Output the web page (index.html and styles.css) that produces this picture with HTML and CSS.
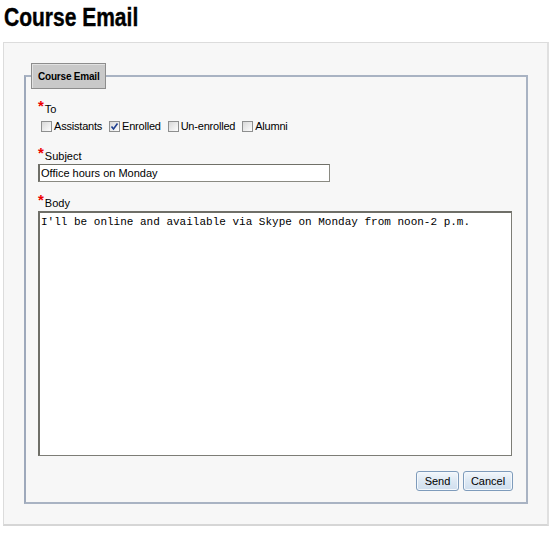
FILE: index.html
```html
<!DOCTYPE html>
<html lang="en">
<head>
  <meta charset="UTF-8">
  <meta name="viewport" content="width=device-width, initial-scale=1.0">
  <title>Course Email</title>
  <link rel="stylesheet" href="styles.css">
</head>
<body>
  <h1 class="page-title"><span>Course Email</span></h1>

  <div class="panel">
    <fieldset class="email-form">
      <legend>Course Email</legend>

      <div class="field-label"><span class="req">*</span>To</div>
      <div class="checks">
        <label class="check"><span class="box"></span>Assistants</label>
        <label class="check"><span class="box checked"><svg width="9" height="9" viewBox="0 0 9 9"><path d="M1.5 4.5 L3.5 7 L7.5 1.5" fill="none" stroke="#1f3f8f" stroke-width="1.6"/></svg></span>Enrolled</label>
        <label class="check"><span class="box"></span>Un-enrolled</label>
        <label class="check"><span class="box"></span>Alumni</label>
      </div>

      <div class="field-label gap"><span class="req">*</span>Subject</div>
      <input class="text-input" type="text" value="Office hours on Monday">

      <div class="field-label gap"><span class="req">*</span>Body</div>
      <textarea class="body-input">I'll be online and available via Skype on Monday from noon-2 p.m.</textarea>

      <div class="actions">
        <button class="btn send">Send</button>
        <button class="btn cancel">Cancel</button>
      </div>
    </fieldset>
  </div>
</body>
</html>
```

FILE: styles.css
```css
body {
  margin: 0;
  padding: 0 3px;
  background: #fff;
  color: #000;
  font-family: "Liberation Sans", Arial, sans-serif;
  font-size: 11px;
}
.page-title {
  margin: 0;
  padding: 3px 0 0 1px;
  height: 42px;
  box-sizing: border-box;
  font-family: "Liberation Sans", Arial, sans-serif;
  font-size: 25px;
  line-height: 28px;
  font-weight: bold;
}
.page-title span {
  display: inline-block;
  transform: scaleX(0.84);
  transform-origin: left center;
  -webkit-text-stroke: 0.4px #000;
}
.panel {
  width: 546px;
  box-sizing: border-box;
  padding: 20px;
  background: #f7f7f7;
  border: 1px solid #dcdcdc;
  border-bottom: 2px solid #d6d6d6;
  border-right: 2px solid #e0e0e0;
}
.email-form {
  margin: 0;
  width: 504px;
  box-sizing: border-box;
  padding: 14px 12px 11px 12px;
  border: 2px solid #a9b3c3;
  border-left-color: #9ea9bb;
}
.email-form legend {
  display: block;
  height: 26px;
  box-sizing: border-box;
  margin-left: -7px;
  padding: 6px 5px 0 6px;
  background: #c9c9c9;
  border: 1px solid #8d8d8d;
  box-shadow: inset 1px 1px 0 #e2e2e2;
  font-size: 10px;
  line-height: 13px;
  font-weight: bold;
  letter-spacing: -0.2px;
}
.field-label {
  line-height: 13px;
  height: 13px;
}
.field-label.gap {
  margin-top: 17px;
}
.req {
  color: #e00;
  font-size: 15px;
  font-weight: bold;
  line-height: 0;
  vertical-align: 2px;
  margin-right: 1px;
}
.checks {
  margin-top: 4px;
  line-height: 13px;
  height: 13px;
  white-space: nowrap;
  letter-spacing: -0.2px;
}
.check {
  margin-right: 1px;
}
.box {
  display: inline-block;
  width: 11px;
  height: 11px;
  box-sizing: border-box;
  margin: 0 2px 0 3px;
  vertical-align: -2px;
  border: 1px solid #8e8f8f;
  background: linear-gradient(135deg, #d8d8d8, #fdfdfd);
  position: relative;
}
.box svg {
  position: absolute;
  left: 0;
  top: 0;
}
.text-input {
  display: block;
  margin: 1px 0 0;
  width: 292px;
  height: 18px;
  box-sizing: border-box;
  padding: 0 1px;
  border: 1px solid #8a8a82;
  border-left: 2px solid #6f6f68;
  border-top-color: #707068;
  background: #fff;
  font-family: "Liberation Sans", Arial, sans-serif;
  font-size: 11px;
  color: #000;
}
.text-input + .field-label {
  margin-top: 15px;
}
.body-input {
  display: block;
  margin: 1px 0 0;
  width: 474px;
  height: 245px;
  box-sizing: border-box;
  padding: 3px 1px;
  border: 1px solid #7d7d76;
  border-left: 2px solid #6f6f68;
  border-top: 2px solid #6f6f68;
  background: #fff;
  resize: none;
  font-family: "Liberation Mono", "Courier New", monospace;
  font-size: 11px;
  line-height: 13px;
  color: #000;
}
.actions {
  display: flex;
  justify-content: flex-end;
  gap: 4px;
  margin-top: 15px;
  padding-right: 1px;
}
.btn {
  height: 20px;
  box-sizing: border-box;
  padding: 0;
  border: 1px solid #7e9bbb;
  border-radius: 3px;
  background: linear-gradient(#f3f7fb, #dde8f3 50%, #cfdeee);
  box-shadow: inset 0 0 0 1px #f4f8fc;
  font-family: "Liberation Sans", Arial, sans-serif;
  font-size: 11px;
  line-height: 18px;
  color: #000;
}
.btn.send {
  width: 43px;
}
.btn.cancel {
  width: 50px;
}
```
